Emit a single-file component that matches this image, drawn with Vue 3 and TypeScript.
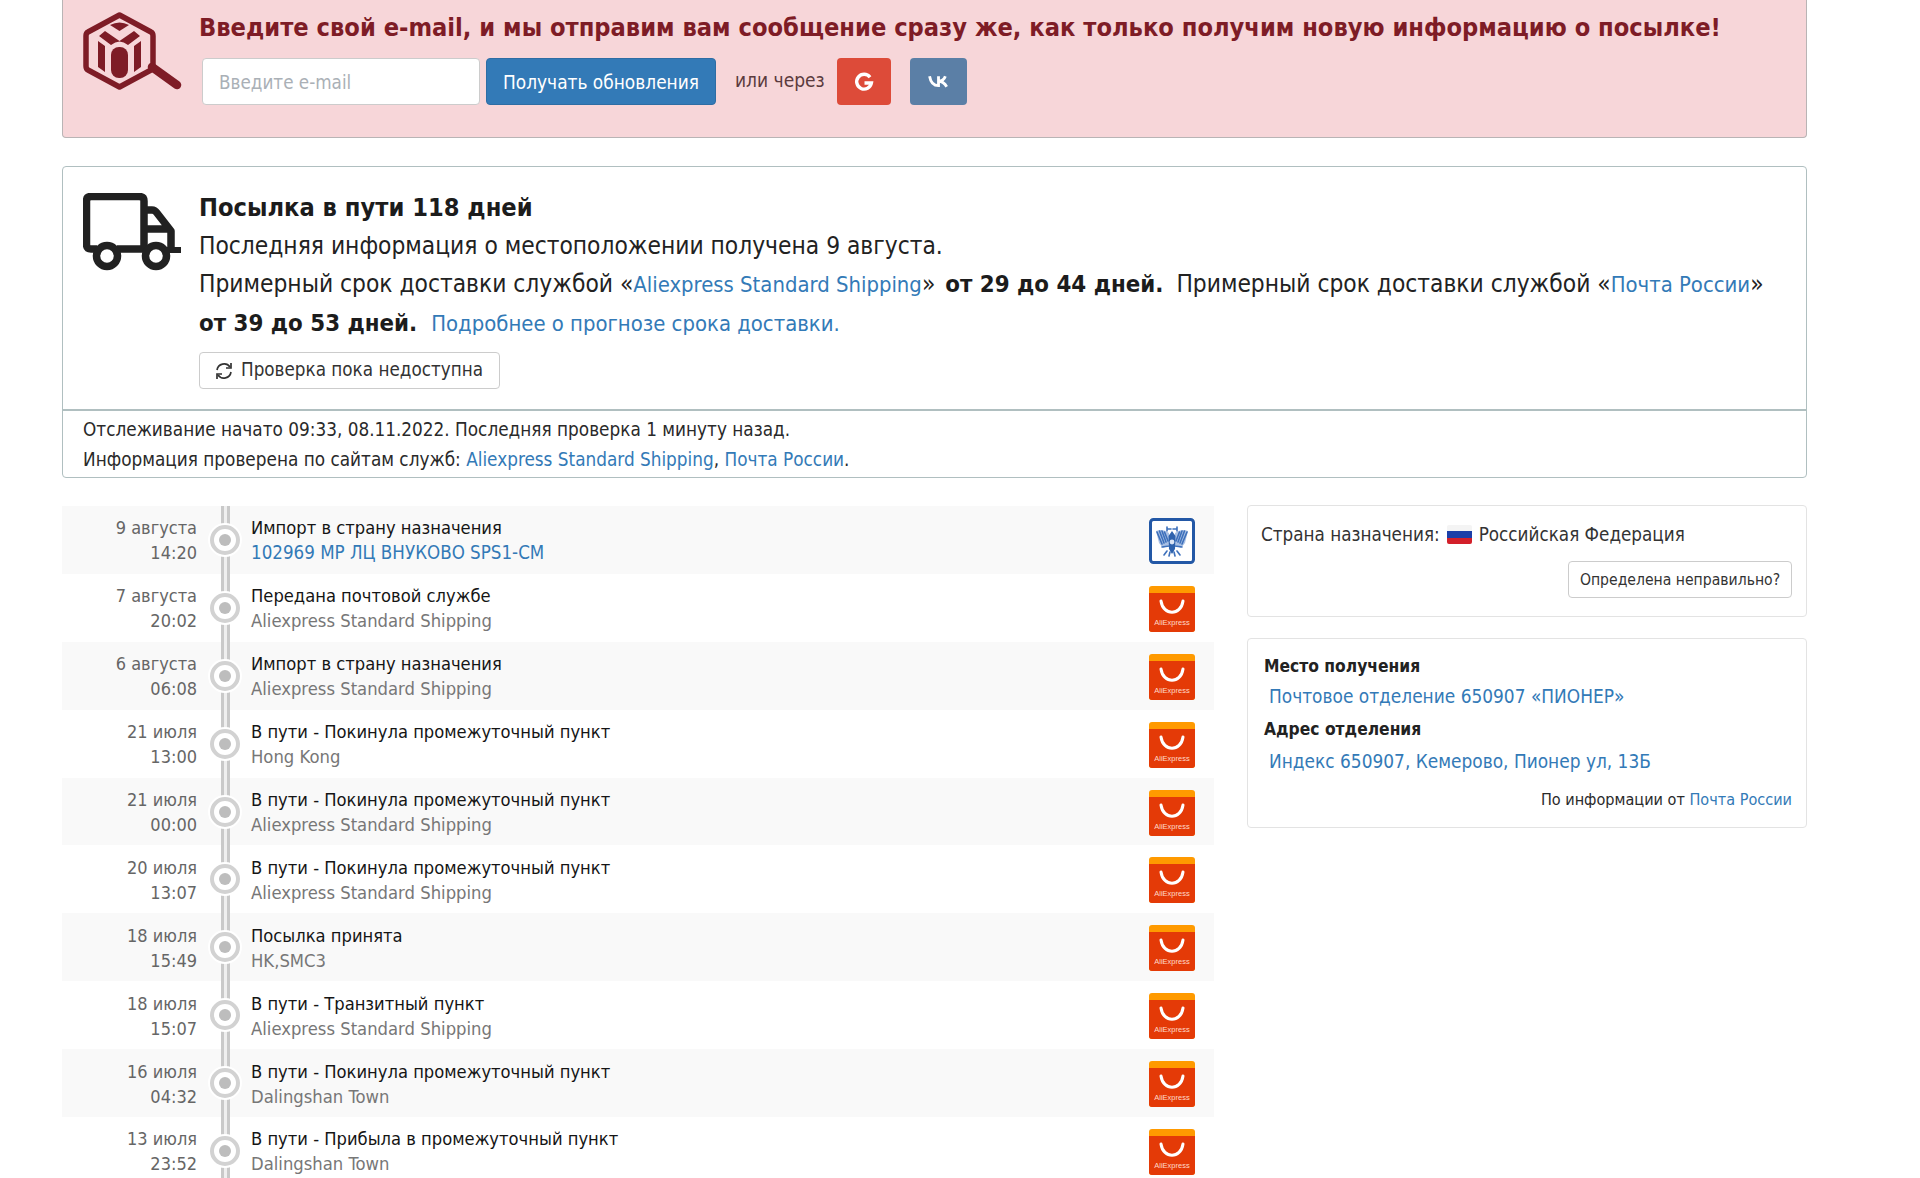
<script setup lang="ts">
interface Ev { d: string; t: string; title: string; sub: string; link?: boolean; ru?: boolean }
const ae = 'Aliexpress Standard Shipping'
const events: Ev[] = [
  { d: '9 августа', t: '14:20', title: 'Импорт в страну назначения', sub: '102969 МР ЛЦ ВНУКОВО SPS1-СМ', link: true, ru: true },
  { d: '7 августа', t: '20:02', title: 'Передана почтовой службе', sub: ae },
  { d: '6 августа', t: '06:08', title: 'Импорт в страну назначения', sub: ae },
  { d: '21 июля', t: '13:00', title: 'В пути - Покинула промежуточный пункт', sub: 'Hong Kong' },
  { d: '21 июля', t: '00:00', title: 'В пути - Покинула промежуточный пункт', sub: ae },
  { d: '20 июля', t: '13:07', title: 'В пути - Покинула промежуточный пункт', sub: ae },
  { d: '18 июля', t: '15:49', title: 'Посылка принята', sub: 'HK,SMC3' },
  { d: '18 июля', t: '15:07', title: 'В пути - Транзитный пункт', sub: ae },
  { d: '16 июля', t: '04:32', title: 'В пути - Покинула промежуточный пункт', sub: 'Dalingshan Town' },
  { d: '13 июля', t: '23:52', title: 'В пути - Прибыла в промежуточный пункт', sub: 'Dalingshan Town' },
]
</script>

<template>
  <div class="page">
    <section class="alert">
      <svg class="logo" viewBox="0 0 100 78" width="100" height="78">
        <path d="M36.5 3 L68 20 Q70 21 70 24 V54 Q70 57 68 58 L36.5 75 L5 58 Q3 57 3 54 V24 Q3 21 5 20 Z" fill="none" stroke="#7e1c26" stroke-width="5.5" stroke-linejoin="round"/>
        <path d="M27 13 Q36.5 8 46 13 L36.5 19 Z" fill="#7e1c26"/>
        <path d="M16 24 L22 19 L36.5 29 L51 19 L57 24 L45 33 Q36.5 26 28 33 Z" fill="#7e1c26"/>
        <path d="M15 29 L22 34 V60 L15 55 Z M58 29 L51 34 V60 L58 55 Z" fill="#7e1c26"/>
        <rect x="28" y="35" width="17" height="31" rx="8" fill="#7e1c26"/>
        <path d="M69 55 L94 73" stroke="#7e1c26" stroke-width="8.5" stroke-linecap="round"/>
      </svg>
      <div class="alert-body">
        <h2 class="alert-title">Введите свой e-mail, и мы отправим вам сообщение сразу же, как только получим новую информацию о посылке!</h2>
        <form class="sub-form" @submit.prevent>
          <input class="email" placeholder="Введите e-mail" />
          <button class="btn-primary">Получать обновления</button>
          <span class="or">или через</span>
          <a class="social g">
            <svg viewBox="0 0 20 20" width="20" height="20"><path d="M16 5.2 A7.4 7.4 0 1 0 17.4 11 H10.5" fill="none" stroke="#fff" stroke-width="3.4"/></svg>
          </a>
          <a class="social vk">
            <svg viewBox="0 0 20 14" width="21" height="15"><path d="M1.5 2 Q3 11 10 11 V2 M10 6.8 Q15 6.5 16.5 2 M10 6.8 Q15 7 17.8 12" fill="none" stroke="#fff" stroke-width="2.7"/></svg>
          </a>
        </form>
      </div>
    </section>

    <section class="status">
      <div class="status-main">
        <svg class="truck" viewBox="0 0 98 78" width="98" height="78">
          <path d="M14 56 H8 Q3.500 56 3.500 51 V8 Q3.500 3.500 8 3.500 H56 Q61 3.500 61 8 V56 H62 M34 56 H62 M61 17 H69 Q72 17 74 20 L88 38 V56 M61 36 H88" fill="none" stroke="#212121" stroke-width="7.500" stroke-linejoin="round"/>
          <circle cx="24" cy="63" r="10.500" fill="#fff" stroke="#212121" stroke-width="7.500"/>
          <circle cx="73" cy="63" r="10.500" fill="#fff" stroke="#212121" stroke-width="7.500"/>
          <path d="M84 57 H97" stroke="#212121" stroke-width="6" stroke-linecap="round"/>
        </svg>
        <div class="status-text">
          <h3 class="status-title">Посылка в пути 118 дней</h3>
          <p>Последняя информация о местоположении получена 9 августа.</p>
          <p>Примерный срок доставки службой «<a>Aliexpress Standard Shipping</a>» <b class="term-a">от 29 до 44 дней.</b> Примерный срок доставки службой «<a>Почта России</a>» <b class="term-b">от 39 до 53 дней.</b> <a>Подробнее о прогнозе срока доставки.</a></p>
          <button class="btn-default check">
            <svg viewBox="0 0 20 20" width="20" height="20"><path d="M3 9 A7.2 7.2 0 0 1 16 6 M17 11 A7.2 7.2 0 0 1 4 14" fill="none" stroke="#333" stroke-width="1.7"/><path d="M17 2 V7 H12 M3 18 V13 H8" fill="none" stroke="#333" stroke-width="1.7"/></svg>
            Проверка пока недоступна
          </button>
        </div>
      </div>
      <div class="status-foot">
        <div>Отслеживание начато 09:33, 08.11.2022. Последняя проверка 1 минуту назад.</div>
        <div>Информация проверена по сайтам служб: <a>Aliexpress Standard Shipping</a>, <a>Почта России</a>.</div>
      </div>
    </section>

    <div class="columns">
      <div class="timeline">
        <div v-for="(e, i) in events" :key="i" class="row">
          <div class="when"><div>{{ e.d }}</div><div>{{ e.t }}</div></div>
          <div class="track"><span class="node"></span></div>
          <div class="what">
            <div class="what-title">{{ e.title }}</div>
            <div :class="e.link ? 'sub-link' : 'sub'">{{ e.sub }}</div>
          </div>
          <svg v-if="e.ru" class="svc" viewBox="0 0 46 46" width="46" height="46">
            <rect x="1.5" y="1.5" width="43" height="43" rx="3" fill="#fff" stroke="#2358a6" stroke-width="3"/>
            <path d="M7 13 Q14 10 20 15 L20 27 L14 30 L10 25 Z M39 13 Q32 10 26 15 L26 27 L32 30 L36 25 Z" fill="#a9c0e4"/>
            <g fill="none" stroke="#3d70bb" stroke-width="1.6" stroke-linecap="round">
              <path d="M19 11 H22 M27 11 H24 M18 9 V13 M28 9 V13"/>
              <path d="M8 14 L13 26 M10.500 13 L15 25 M13 13 L17 24 M15.500 14 L19 23 M38 14 L33 26 M35.500 13 L31 25 M33 13 L29 24 M30.500 14 L27 23"/>
              <path d="M13 29 L20 28 M33 29 L26 28 M18 33 L15 37 M28 33 L31 37 M21 34 L20 38 M25 34 L26 38"/>
            </g>
            <path d="M23 13 L26.500 18 L26 31 L23 36 L20 31 L19.500 18 Z" fill="#2e62ad"/>
            <circle cx="23" cy="24" r="2.400" fill="#dbe5f5"/>
          </svg>
          <svg v-else class="svc" viewBox="0 0 46 46" width="46" height="46">
            <rect width="46" height="46" rx="3" fill="#ff9a00"/>
            <path d="M0 7 H46 V43 Q46 46 43 46 H3 Q0 46 0 43 Z" fill="#e43a07"/>
            <path d="M12 15 C14 30 32 30 34 15" fill="none" stroke="#fff" stroke-width="3" stroke-linecap="round"/>
            <text x="23" y="39" text-anchor="middle" font-size="7.500" fill="#ffd9c8" font-family="Liberation Sans, sans-serif">AliExpress</text>
          </svg>
        </div>
      </div>

      <aside class="side">
        <div class="panel country">
          <div class="country-line">
            Страна назначения:
            <span class="flag"><i class="w"></i><i class="b"></i><i class="r"></i></span>
            Российская Федерация
          </div>
          <button class="btn-default wrong">Определена неправильно?</button>
        </div>
        <div class="panel place">
          <div class="place-h">Место получения</div>
          <a class="place-l first">Почтовое отделение 650907 «ПИОНЕР»</a>
          <div class="place-h">Адрес отделения</div>
          <a class="place-l">Индекс 650907, Кемерово, Пионер ул, 13Б</a>
          <div class="source">По информации от <a>Почта России</a></div>
        </div>
      </aside>
    </div>
  </div>
</template>

<style>
html, body { margin: 0; background: #fff; }
</style>

<style scoped>
.page {
  height: 1178px;
  overflow: hidden;
  box-sizing: border-box;
  padding: 0 113px 0 62px;
  font-family: "DejaVu Sans", "Noto Sans", sans-serif;
  font-stretch: condensed;
  color: #333;
  font-size: 18.3px;
}
a { color: #337ab7; text-decoration: none; }
p { margin: 0; }

.alert {
  display: flex;
  height: 138px;
  box-sizing: border-box;
  background: #f7d6d9;
  border: 1px solid #b9b4b5;
  border-top: 0;
  border-radius: 0 0 4px 4px;
  padding: 12px 0 0 20px;
}
.logo { flex: none; }
.alert-body { margin-left: 16px; min-width: 0; }
.alert-title {
  margin: 0;
  font-size: 25.2px;
  line-height: 31px;
  font-weight: 700;
  color: #7e1c26;
  white-space: nowrap;
}
.sub-form { display: flex; align-items: center; margin: 15px 0 0 3px; }
.email {
  width: 278px;
  height: 47px;
  box-sizing: border-box;
  border: 1px solid #ccc;
  border-radius: 4px;
  padding: 1px 16px 0;
  font: inherit;
  font-stretch: condensed;
  font-size: 18.7px;
  background: #fff;
}
.email::placeholder { color: #aab0b6; }
.btn-primary {
  margin-left: 6px;
  width: 230px;
  height: 47px;
  border: 1px solid #2e6da4;
  border-radius: 4px;
  background: #337ab7;
  color: #fff;
  font: inherit;
  font-stretch: condensed;
  font-size: 18.9px;
}
.or { margin-left: 19px; width: 102px; position: relative; top: -2px; color: #5b3b3e; font-size: 19px; }
.social {
  height: 47px;
  display: flex;
  align-items: center;
  justify-content: center;
  border-radius: 4px;
}
.g { width: 54px; background: #dd4b39; }
.vk { width: 57px; margin-left: 19px; background: #5b7fa6; }

.status {
  margin-top: 28px;
  height: 312px;
  box-sizing: border-box;
  border: 1px solid #b0bfc0;
  border-radius: 4px;
  display: flex;
  flex-direction: column;
}
.status-main {
  height: 244px;
  flex: none;
  box-sizing: border-box;
  display: flex;
  padding: 26px 20px 0 20px;
  border-bottom: 2px solid #b0bfc0;
  color: #222;
}
.truck { flex: none; }
.status-text { margin-left: 18px; font-size: 24.3px; line-height: 38px; margin-top: 0; }
.status-text a { font-size: 21.9px; }
.status-title { margin: 0; font-size: 25.2px; line-height: 30px; font-weight: 700; color: #1c1c1c; }
.status-text p { margin: 0; }
.status-text b { color: #1c1c1c; font-size: 23.8px; }
.term-a { margin: 0 6px 0 3px; }
.term-b { margin-right: 7px; }
.status-title + p { margin-top: 4px; }
.btn-default {
  background: #fff;
  border: 1px solid #ccc;
  border-radius: 4px;
  font: inherit;
  font-stretch: condensed;
  color: #333;
}
.check {
  display: flex;
  align-items: center;
  gap: 7px;
  margin-top: 9px;
  width: 301px;
  height: 37px;
  padding: 0 0 0 14px;
  font-size: 18.7px;
  line-height: 1;
}
.status-foot { padding: 3.5px 20px 0; line-height: 30px; font-size: 18.8px; color: #2a2a2a; }

.columns { display: flex; gap: 33px; margin-top: 28px; align-items: flex-start; }
.timeline { flex: none; width: 1152px; }
.row {
  display: flex;
  align-items: center;
  height: 67.9px;
  padding-right: 19px;
  line-height: 25px;
  box-sizing: border-box;
}
.row:nth-child(odd) { background: #f9f9f9; }
.when { width: 135px; flex: none; text-align: right; color: #666; padding-top: 1px; font-size: 18px; }
.track { width: 54px; flex: none; align-self: stretch; position: relative; }
.track::before {
  content: "";
  position: absolute;
  top: 0; bottom: 0;
  left: 24px;
  width: 3px;
  border-left: 3px solid #c9c9c9;
  border-right: 3px solid #c9c9c9;
  background: #efefef;
}
.node {
  position: absolute;
  left: 13px;
  top: 50%;
  margin-top: -15px;
  width: 30px;
  height: 30px;
  box-sizing: border-box;
  border: 4px solid #d2d2d2;
  border-radius: 50%;
  background: #fff;
  box-shadow: 0 0 0 2px #fff;
}
.node::after {
  content: "";
  position: absolute;
  left: 5px; top: 5px;
  width: 12px; height: 12px;
  border-radius: 50%;
  background: #bdbdbd;
}
.what { flex: 1; min-width: 0; padding-top: 1px; }
.what-title { color: #151515; font-size: 18.2px; }
.sub { color: #777; }
.sub-link { color: #337ab7; font-size: 18.6px; }
.svc { flex: none; margin-top: 2px; }

.side { flex: none; width: 560px; display: flex; flex-direction: column; gap: 21px; margin-top: -1px; }
.panel { border: 1px solid #e3e3e3; border-radius: 4px; box-sizing: border-box; }
.country { height: 112px; padding: 15px 14px 0 13px; display: flex; flex-direction: column; font-size: 18.7px; }
.country-line { line-height: 27px; display: flex; align-items: center; gap: 7px; }
.flag {
  width: 25px; height: 19px;
  display: flex; flex-direction: column;
  border-radius: 2px; overflow: hidden;
}
.flag i { flex: 1; }
.w { background: #f4f4f4; } .b { background: #1c3fa8; } .r { background: #d3202a; }
.wrong { align-self: flex-end; margin-top: 13px; width: 224px; height: 37px; font-size: 15.6px; padding: 0; }
.place { height: 190px; padding: 15px 14px 0 16px; font-size: 18.9px; }
.place-h { font-weight: 700; font-size: 17.3px; line-height: 24px; color: #222; }
.place-l { display: block; padding-left: 5px; line-height: 26px; margin: 7px 0 8px; }
.place-l.first { margin: 5px 0 8px; }
.source { text-align: right; font-size: 16.1px; line-height: 22px; margin-top: 15px; color: #2a2a2a; }
</style>
